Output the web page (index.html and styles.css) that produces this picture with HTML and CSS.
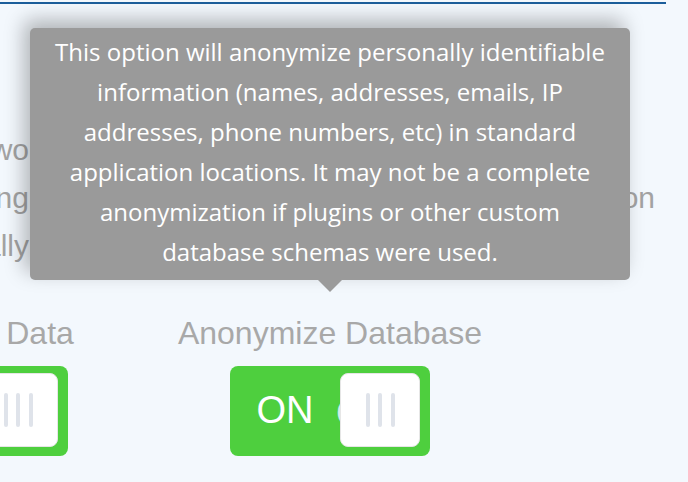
FILE: index.html
```html
<!DOCTYPE html>
<html lang="en">
<head>
<meta charset="utf-8">
<title>Anonymize Database</title>
<link rel="stylesheet" href="styles.css">
</head>
<body>
<div class="topline"></div>
<div class="options">
  <div class="option">
    <p class="desc desc-left"><span class="line">data that is two</span><span class="line">ing</span><span class="line">manually</span></p>
    <div class="label">Scramble Data</div>
    <div class="switch">
      <span class="on">ON</span>
      <span class="off">OFF</span>
      <span class="knob"><i></i><i></i><i></i></span>
    </div>
  </div>
  <div class="option">
    <p class="desc desc-right"><span class="line">Removes personal</span><span class="line line-long">anonymized after the migration</span><span class="line">is completed</span></p>
    <div class="label">Anonymize Database</div>
    <div class="switch">
      <span class="on">ON</span>
      <span class="off">OFF</span>
      <span class="knob"><i></i><i></i><i></i></span>
    </div>
  </div>
</div>
<div class="tooltip">This option will anonymize personally identifiable<br>information (names, addresses, emails, IP<br>addresses, phone numbers, etc) in standard<br>application locations. It may not be a complete<br>anonymization if plugins or other custom<br>database schemas were used.</div>
</body>
</html>
```
FILE: styles.css
```css
html, body {
  margin: 0;
  padding: 0;
  background: #f3f8fd;
  width: 688px;
  height: 482px;
  overflow: hidden;
}
body {
  position: relative;
  font-family: "Liberation Sans", Arial, sans-serif;
}
.topline {
  margin-top: 2px;
  width: 666px;
  height: 2px;
  background: #1b5e9b;
}
.options {
  display: grid;
  grid-template-columns: 362px 362px;
  margin-left: -213px;
  margin-top: 122px;
}
.option {
  display: flex;
  flex-direction: column;
  align-items: center;
}
.desc {
  margin: 0;
  font-size: 30px;
  line-height: 48px;
  color: #a3a3a3;
  white-space: nowrap;
  height: 144px;
}
.desc .line {
  display: block;
}
.desc-left {
  align-self: stretch;
  text-align: right;
  padding-right: 120px;
}
.desc-right {
  align-self: flex-start;
  width: 506px;
  text-align: left;
}
.desc-right .line-long {
  text-align: right;
}
.label {
  margin-top: 43px;
  font-size: 32px;
  line-height: 40px;
  color: #a8a8a8;
  white-space: nowrap;
}
.switch {
  position: relative;
  margin-top: 13px;
  width: 200px;
  height: 90px;
  box-sizing: border-box;
  padding: 7px 10px 9px 0;
  border-radius: 8px;
  background: #4ecf3e;
  display: flex;
  align-items: center;
}
.switch .on {
  width: 110px;
  text-align: center;
  font-size: 38px;
  color: #ffffff;
  line-height: 1;
}
.switch .off {
  position: absolute;
  left: 106px;
  top: 28px;
  font-size: 38px;
  line-height: 1;
  color: #d4ecea;
}
.knob {
  position: relative;
  z-index: 1;
  width: 80px;
  height: 74px;
  box-sizing: border-box;
  background: #ffffff;
  border: 1px solid #e6e6e6;
  border-radius: 8px;
  display: flex;
  justify-content: center;
  align-items: center;
  gap: 8.5px;
}
.knob i {
  display: block;
  width: 4px;
  height: 34px;
  border-radius: 2px;
  background: #dfe3ea;
}
.tooltip {
  position: absolute;
  left: 30px;
  top: 28px;
  width: 600px;
  box-sizing: border-box;
  padding: 4px 10px 8px;
  background: #9a9a9a;
  border-radius: 5px;
  box-shadow: -6px -8px 20px rgba(0, 0, 0, 0.28);
  color: #ffffff;
  font-family: "Open Sans", "Noto Sans", sans-serif;
  font-size: 24px;
  line-height: 40px;
  text-align: center;
  white-space: nowrap;
  z-index: 5;
}
.tooltip::after {
  content: "";
  position: absolute;
  left: 288px;
  top: 100%;
  border-left: 12px solid transparent;
  border-right: 12px solid transparent;
  border-top: 12px solid #9a9a9a;
}
```
